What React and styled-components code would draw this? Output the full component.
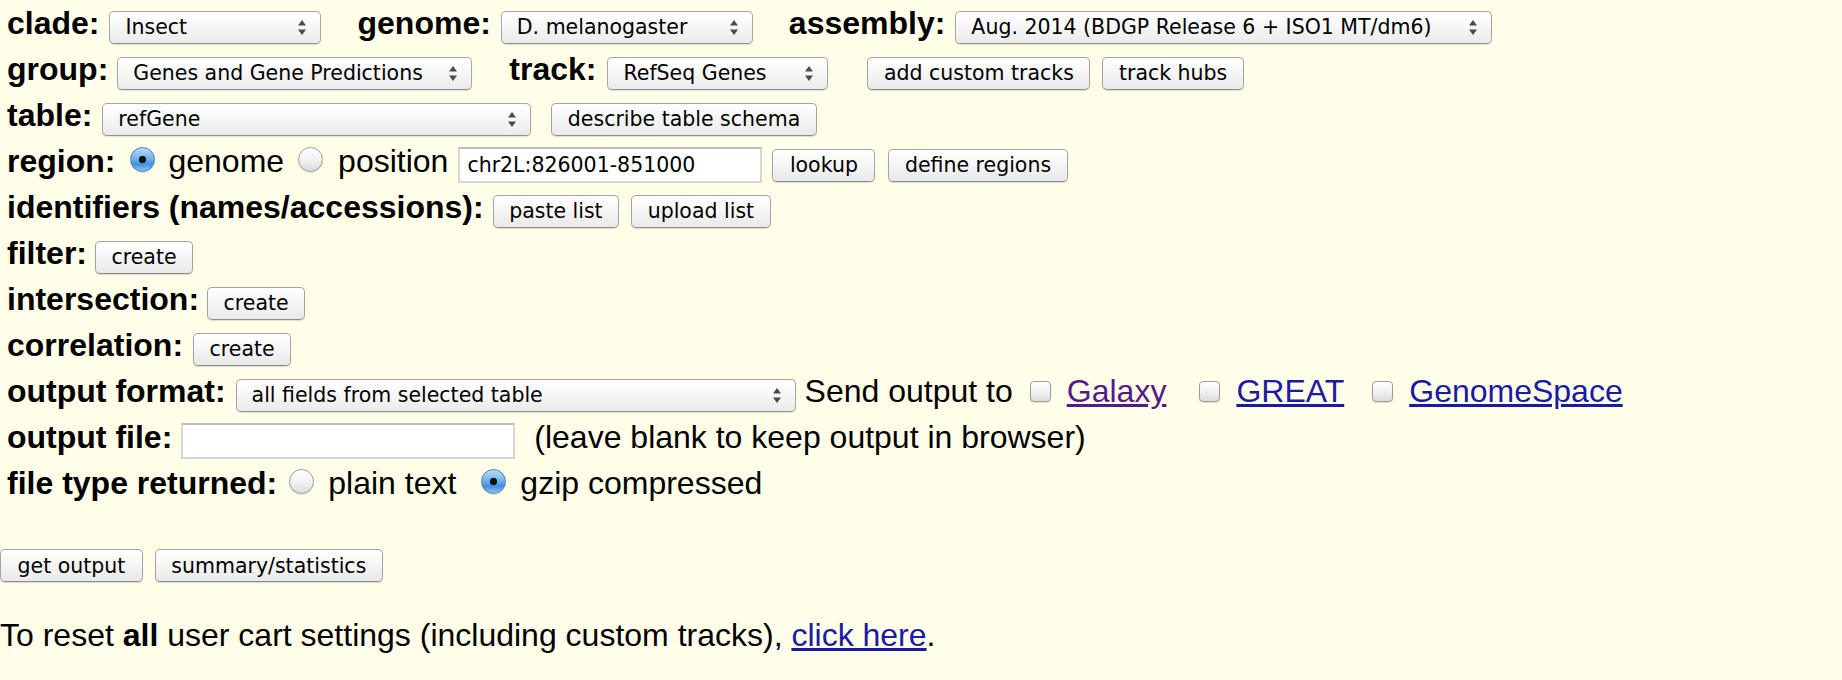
import React from 'react';
import styled, { createGlobalStyle } from 'styled-components';

const GlobalStyle = createGlobalStyle`
  html, body {
    margin: 0;
    padding: 0;
    background: #fffee8;
  }
  body {
    font-family: "Liberation Sans", Arial, sans-serif;
    color: #000;
  }
`;

const Page = styled.div`
  width: 1842px;
  height: 680px;
  overflow: hidden;
  background: #fffee8;
  font-size: 32px;
`;

const Form = styled.div`
  padding-left: 7px;
`;

const Row = styled.div`
  display: flex;
  align-items: baseline;
  height: 46px;
  line-height: 46px;
  white-space: nowrap;
`;

const Label = styled.b`
  font-weight: 700;
  margin-left: ${({ $ml }) => $ml || 0}px;
`;

const Text = styled.span`
  margin-left: ${({ $ml }) => $ml || 0}px;
`;

const Link = styled.a`
  margin-left: ${({ $ml }) => $ml || 0}px;
  color: ${({ $visited }) => ($visited ? '#551a8b' : '#1a1aa6')};
  text-decoration: underline;
  cursor: pointer;
`;

const control = `
  font-family: "DejaVu Sans", "Liberation Sans", sans-serif;
  font-size: 20.5px;
  color: #000;
`;

const SelectBox = styled.div`
  ${control}
  display: inline-flex;
  align-items: center;
  justify-content: space-between;
  box-sizing: border-box;
  width: ${({ $w }) => $w}px;
  height: 33px;
  margin-left: ${({ $ml }) => $ml || 0}px;
  padding: 0 14px 0 15px;
  border: 1px solid #a6a6a6;
  border-bottom-color: #8f8f8f;
  border-radius: 5px;
  background: linear-gradient(#ffffff, #f7f7f7 45%, #ebebeb);
  box-shadow: 0 1px 1px rgba(0, 0, 0, 0.12);
  line-height: normal;
`;

const SelectText = styled.span`
  line-height: normal;
`;

const Arrows = () => (
  <svg width="8" height="15" viewBox="0 0 8 15">
    <path d="M4 0 L8 5.5 H0 Z" fill="#4a4a4a" />
    <path d="M0 9.5 H8 L4 15 Z" fill="#4a4a4a" />
  </svg>
);

const Select = ({ w, ml, children }) => (
  <SelectBox $w={w} $ml={ml}>
    <SelectText>{children}</SelectText>
    <Arrows />
  </SelectBox>
);

const Button = styled.button`
  ${control}
  box-sizing: border-box;
  height: 33px;
  margin: 0 0 0 ${({ $ml }) => $ml || 0}px;
  padding: 0 ${({ $pad }) => $pad || 15.5}px;
  border: 1px solid #a3a3a3;
  border-bottom-color: #8c8c8c;
  border-radius: 5px;
  background: linear-gradient(#ffffff, #f6f6f6 45%, #e9e9e9);
  box-shadow: 0 1px 1px rgba(0, 0, 0, 0.14);
  line-height: normal;
  cursor: pointer;
`;

const TextInput = styled.input`
  ${control}
  box-sizing: border-box;
  width: ${({ $w }) => $w}px;
  height: 36px;
  margin: 0 0 0 ${({ $ml }) => $ml || 0}px;
  padding: 0 7px;
  border: 2px solid #d6d6d6;
  border-top-color: #bcbcbc;
  background: #fff;
  line-height: normal;
  outline: none;
`;

const Radio = styled.input.attrs({ type: 'radio' })`
  appearance: none;
  box-sizing: border-box;
  width: 25px;
  height: 25px;
  margin: 0 0 -3px ${({ $ml }) => $ml || 0}px;
  border-radius: 50%;
  border: 1px solid #9d9d9d;
  background: linear-gradient(#ffffff, #f2f2f2 50%, #dcdcdc);
  box-shadow: 0 1px 1px rgba(0, 0, 0, 0.12);

  &:checked {
    border-color: #5a7ea6;
    background: radial-gradient(circle, #111 0 3.4px, transparent 4px),
      linear-gradient(#b9dcf8, #6aaeea 50%, #3f8fe0 70%, #8cc6f5);
  }
`;

const Checkbox = styled.input.attrs({ type: 'checkbox' })`
  appearance: none;
  box-sizing: border-box;
  width: 21px;
  height: 21px;
  margin: 0 0 -5px ${({ $ml }) => $ml || 0}px;
  border-radius: 4px;
  border: 1px solid #9d9d9d;
  background: linear-gradient(#ffffff, #f2f2f2 50%, #dcdcdc);
  box-shadow: 0 1px 1px rgba(0, 0, 0, 0.12);
`;

const ButtonBar = styled.div`
  display: flex;
  align-items: center;
  margin-top: 43px;
`;

const Reset = styled.p`
  margin: 34.6px 0 0;
  line-height: 37px;
  white-space: nowrap;
`;

export default function App() {
  return (
    <Page>
      <GlobalStyle />
      <Form>
        <Row>
          <Label>clade:</Label>
          <Select w={212} ml={10}>Insect</Select>
          <Label $ml={36}>genome:</Label>
          <Select w={252} ml={10}>D. melanogaster</Select>
          <Label $ml={36}>assembly:</Label>
          <Select w={537} ml={10}>Aug. 2014 (BDGP Release 6 + ISO1 MT/dm6)</Select>
        </Row>
        <Row>
          <Label>group:</Label>
          <Select w={355} ml={9}>Genes and Gene Predictions</Select>
          <Label $ml={37}>track:</Label>
          <Select w={221} ml={11}>RefSeq Genes</Select>
          <Button $ml={39}>add custom tracks</Button>
          <Button $ml={12}>track hubs</Button>
        </Row>
        <Row>
          <Label>table:</Label>
          <Select w={429} ml={10}>refGene</Select>
          <Button $ml={20}>describe table schema</Button>
        </Row>
        <Row>
          <Label>region:</Label>
          <Radio name="region" $ml={15} defaultChecked />
          <Text $ml={13}>genome</Text>
          <Radio name="region" $ml={14} />
          <Text $ml={15}>position</Text>
          <TextInput $w={304} $ml={10} defaultValue="chr2L:826001-851000" />
          <Button $ml={10} $pad={16.5}>lookup</Button>
          <Button $ml={13}>define regions</Button>
        </Row>
        <Row>
          <Label>identifiers (names/accessions):</Label>
          <Button $ml={9}>paste list</Button>
          <Button $ml={12}>upload list</Button>
        </Row>
        <Row>
          <Label>filter:</Label>
          <Button $ml={8}>create</Button>
        </Row>
        <Row>
          <Label>intersection:</Label>
          <Button $ml={8}>create</Button>
        </Row>
        <Row>
          <Label>correlation:</Label>
          <Button $ml={10}>create</Button>
        </Row>
        <Row>
          <Label>output format:</Label>
          <Select w={560} ml={10}>all fields from selected table</Select>
          <Text $ml={9}>Send output to</Text>
          <Checkbox $ml={17} />
          <Link $ml={16} $visited>Galaxy</Link>
          <Checkbox $ml={33} />
          <Link $ml={16}>GREAT</Link>
          <Checkbox $ml={28} />
          <Link $ml={16}>GenomeSpace</Link>
        </Row>
        <Row>
          <Label>output file:</Label>
          <TextInput $w={334} $ml={9} />
          <Text $ml={19}>(leave blank to keep output in browser)</Text>
        </Row>
        <Row>
          <Label>file type returned:</Label>
          <Radio name="ftype" $ml={12} />
          <Text $ml={14}>plain text</Text>
          <Radio name="ftype" $ml={25} defaultChecked />
          <Text $ml={14}>gzip compressed</Text>
        </Row>
      </Form>
      <ButtonBar>
        <Button $pad={16.5}>get output</Button>
        <Button $ml={12}>summary/statistics</Button>
      </ButtonBar>
      <Reset>
        To reset <b>all</b> user cart settings (including custom tracks),{' '}
        <Link>click here</Link>.
      </Reset>
    </Page>
  );
}
